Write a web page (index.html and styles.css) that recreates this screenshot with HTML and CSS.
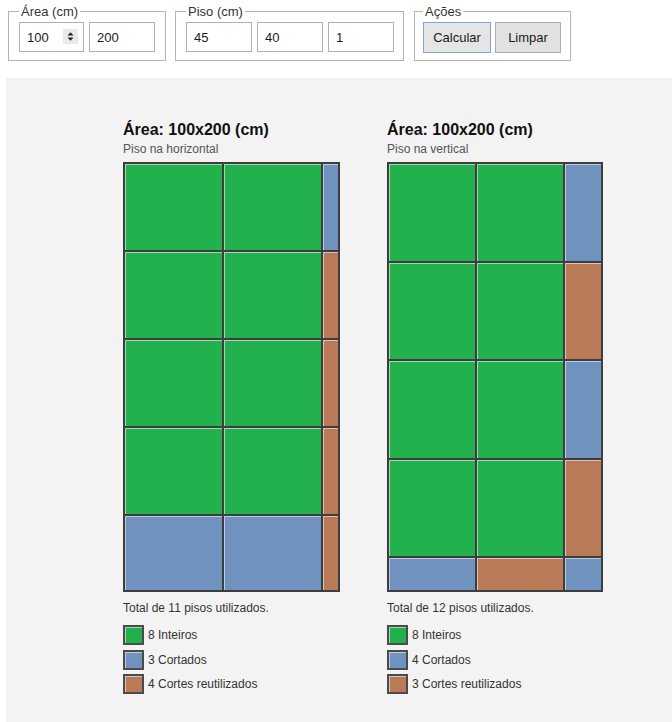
FILE: index.html
```html
<!DOCTYPE html>
<html lang="pt">
<head>
<meta charset="utf-8">
<title>Paginação de pisos</title>
<link rel="stylesheet" href="styles.css">
</head>
<body>
<div class="page">
  <form class="toolbar">
    <fieldset class="group">
      <legend>Área (cm)</legend>
      <div class="row">
        <div class="num">
          <input class="field w65" type="text" value="100">
          <span class="spin"><svg width="15" height="15" viewBox="0 0 15 15"><polygon points="4.5,6.5 10.5,6.5 7.5,3.2" fill="#222"/><polygon points="4.5,8.5 10.5,8.5 7.5,11.8" fill="#222"/></svg></span>
        </div>
        <input class="field" type="text" value="200">
      </div>
    </fieldset>
    <fieldset class="group g-piso">
      <legend>Piso (cm)</legend>
      <div class="row">
        <input class="field" type="text" value="45">
        <input class="field" type="text" value="40">
        <input class="field" type="text" value="1">
      </div>
    </fieldset>
    <fieldset class="group g-acoes">
      <legend>Ações</legend>
      <div class="row row-btn">
        <button type="button" class="btn btn-focus">Calcular</button>
        <button type="button" class="btn btn-limpar">Limpar</button>
      </div>
    </fieldset>
  </form>

  <div class="panel">
    <div class="plan">
      <h2 class="title">Área: 100x200 (cm)</h2>
      <p class="sub">Piso na horizontal</p>
      <div class="grid grid-h">
        <div class="t g"></div><div class="t g"></div><div class="t b"></div>
        <div class="t g"></div><div class="t g"></div><div class="t r"></div>
        <div class="t g"></div><div class="t g"></div><div class="t r"></div>
        <div class="t g"></div><div class="t g"></div><div class="t r"></div>
        <div class="t b"></div><div class="t b"></div><div class="t r"></div>
      </div>
      <p class="total">Total de 11 pisos utilizados.</p>
      <ul class="legend">
        <li><span class="sw g"></span>8 Inteiros</li>
        <li><span class="sw b"></span>3 Cortados</li>
        <li><span class="sw r"></span>4 Cortes reutilizados</li>
      </ul>
    </div>
    <div class="plan">
      <h2 class="title">Área: 100x200 (cm)</h2>
      <p class="sub">Piso na vertical</p>
      <div class="grid grid-v">
        <div class="t g"></div><div class="t g"></div><div class="t b"></div>
        <div class="t g"></div><div class="t g"></div><div class="t r"></div>
        <div class="t g"></div><div class="t g"></div><div class="t b"></div>
        <div class="t g"></div><div class="t g"></div><div class="t r"></div>
        <div class="t b"></div><div class="t r"></div><div class="t b"></div>
      </div>
      <p class="total">Total de 12 pisos utilizados.</p>
      <ul class="legend">
        <li><span class="sw g"></span>8 Inteiros</li>
        <li><span class="sw b"></span>4 Cortados</li>
        <li><span class="sw r"></span>3 Cortes reutilizados</li>
      </ul>
    </div>
  </div>
</div>
</body>
</html>
```

FILE: styles.css
```css
html, body {
  margin: 0;
  padding: 0;
  background: #ffffff;
  overflow: hidden;
}

body {
  font-family: "Liberation Sans", Arial, sans-serif;
  color: #222;
}

.page {
  box-sizing: border-box;
  padding: 4px 0 0 8px;
  height: 722px;
  display: flex;
  flex-direction: column;
}

.toolbar {
  display: flex;
  align-items: stretch;
  gap: 9px;
  margin: 0;
}

.group {
  margin: 0;
  border: 1px solid #b4b4b4;
  padding: 3px 10px 8px 10px;
  min-width: 0;
}

.g-piso {
  padding-right: 9px;
  margin-right: 1px;
}

.g-acoes {
  padding: 3px 9px 7px 8px;
}

.group legend {
  font-size: 13px;
  line-height: 15px;
  color: #333;
  padding: 0 2px;
}

.row {
  display: flex;
  gap: 5px;
}

.row-btn {
  gap: 4px;
}

.num {
  position: relative;
}

.field {
  box-sizing: border-box;
  width: 66px;
  height: 30px;
  border: 1px solid #b0b0b0;
  padding: 0 0 0 7px;
  font-family: "Liberation Sans", Arial, sans-serif;
  font-size: 13px;
  color: #1a1a1a;
  background: #fff;
  margin: 0;
  outline: none;
}

.w65 {
  width: 65px;
}

.spin {
  position: absolute;
  left: 44px;
  top: 7px;
  width: 15px;
  height: 15px;
  background: #e9e9e9;
  display: block;
}

.spin svg {
  display: block;
}

.btn {
  box-sizing: border-box;
  height: 31px;
  width: 68px;
  margin: 0;
  padding: 0;
  border: 1px solid #adadad;
  background: #e1e1e1;
  font-family: "Liberation Sans", Arial, sans-serif;
  font-size: 13px;
  color: #1a1a1a;
}

.btn-focus {
  border-color: #7fa6d6;
  background: #e5e5e5;
}

.btn-limpar {
  width: 66px;
}

.panel {
  flex: 1;
  margin: 17px 0 0 -2px;
  background: #f3f3f3;
  padding: 43px 0 0 117px;
  display: flex;
  gap: 47px;
  align-items: flex-start;
}

.plan {
  display: flex;
  flex-direction: column;
}

.title {
  margin: 0;
  font-size: 16px;
  line-height: 18px;
  font-weight: bold;
  color: #111;
  padding-left: 0;
}

.sub {
  margin: 3px 0 6px 0;
  font-size: 12px;
  line-height: 14px;
  color: #555;
}

.grid {
  display: grid;
  gap: 2px;
  padding: 2px;
  background: #3d3d3d;
  width: max-content;
}

.grid-h {
  grid-template-columns: 97px 97px 15px;
  grid-template-rows: 86px 86px 86px 86px 74px;
}

.grid-v {
  grid-template-columns: 86px 86px 36px;
  grid-template-rows: 96.5px 96.5px 96.5px 96.5px 32px;
}

.t {
  box-shadow: inset 1px 1px 0 rgba(235, 235, 235, 0.65);
}

.g { background-color: #22b14c; }
.b { background-color: #7092be; }
.r { background-color: #b97a57; }

.total {
  margin: 9px 0 0 0;
  font-size: 12px;
  line-height: 14px;
  color: #333;
}

.legend {
  list-style: none;
  margin: 10px 0 0 0;
  padding: 0;
}

.legend li {
  display: flex;
  align-items: center;
  gap: 4px;
  font-size: 12px;
  color: #333;
  height: 20px;
  margin-bottom: 4.5px;
}

.sw {
  box-sizing: border-box;
  width: 21px;
  height: 20px;
  border: 2px solid #4a4a4a;
  box-shadow: inset 1px 1px 0 rgba(235, 235, 235, 0.65);
  display: block;
}
```
